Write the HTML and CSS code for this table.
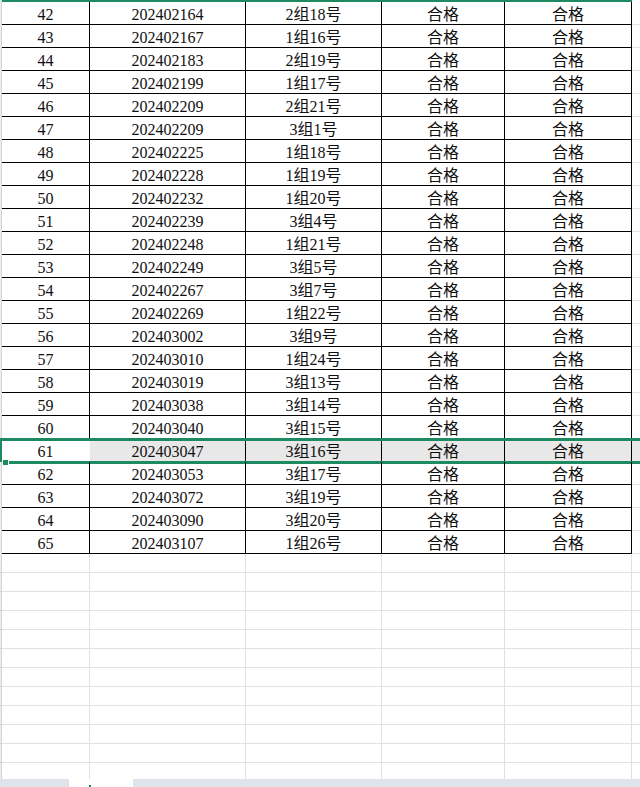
FILE: index.html
```html
<!DOCTYPE html>
<html lang="zh-CN">
<head>
<meta charset="utf-8">
<title>Sheet</title>
<link rel="stylesheet" href="styles.css">
</head>
<body>
<div class="sheet">
  <div class="topline"><div class="lead"></div><div class="green"></div><div></div></div>
  <div class="data">
    <div class="row"><div class="lead"></div><div class="c">42</div><div class="c">202402164</div><div class="c">2组18号</div><div class="c">合格</div><div class="c">合格</div><div class="tail"></div></div>
    <div class="row"><div class="lead"></div><div class="c">43</div><div class="c">202402167</div><div class="c">1组16号</div><div class="c">合格</div><div class="c">合格</div><div class="tail"></div></div>
    <div class="row"><div class="lead"></div><div class="c">44</div><div class="c">202402183</div><div class="c">2组19号</div><div class="c">合格</div><div class="c">合格</div><div class="tail"></div></div>
    <div class="row"><div class="lead"></div><div class="c">45</div><div class="c">202402199</div><div class="c">1组17号</div><div class="c">合格</div><div class="c">合格</div><div class="tail"></div></div>
    <div class="row"><div class="lead"></div><div class="c">46</div><div class="c">202402209</div><div class="c">2组21号</div><div class="c">合格</div><div class="c">合格</div><div class="tail"></div></div>
    <div class="row"><div class="lead"></div><div class="c">47</div><div class="c">202402209</div><div class="c">3组1号</div><div class="c">合格</div><div class="c">合格</div><div class="tail"></div></div>
    <div class="row"><div class="lead"></div><div class="c">48</div><div class="c">202402225</div><div class="c">1组18号</div><div class="c">合格</div><div class="c">合格</div><div class="tail"></div></div>
    <div class="row"><div class="lead"></div><div class="c">49</div><div class="c">202402228</div><div class="c">1组19号</div><div class="c">合格</div><div class="c">合格</div><div class="tail"></div></div>
    <div class="row"><div class="lead"></div><div class="c">50</div><div class="c">202402232</div><div class="c">1组20号</div><div class="c">合格</div><div class="c">合格</div><div class="tail"></div></div>
    <div class="row"><div class="lead"></div><div class="c">51</div><div class="c">202402239</div><div class="c">3组4号</div><div class="c">合格</div><div class="c">合格</div><div class="tail"></div></div>
    <div class="row"><div class="lead"></div><div class="c">52</div><div class="c">202402248</div><div class="c">1组21号</div><div class="c">合格</div><div class="c">合格</div><div class="tail"></div></div>
    <div class="row"><div class="lead"></div><div class="c">53</div><div class="c">202402249</div><div class="c">3组5号</div><div class="c">合格</div><div class="c">合格</div><div class="tail"></div></div>
    <div class="row"><div class="lead"></div><div class="c">54</div><div class="c">202402267</div><div class="c">3组7号</div><div class="c">合格</div><div class="c">合格</div><div class="tail"></div></div>
    <div class="row"><div class="lead"></div><div class="c">55</div><div class="c">202402269</div><div class="c">1组22号</div><div class="c">合格</div><div class="c">合格</div><div class="tail"></div></div>
    <div class="row"><div class="lead"></div><div class="c">56</div><div class="c">202403002</div><div class="c">3组9号</div><div class="c">合格</div><div class="c">合格</div><div class="tail"></div></div>
    <div class="row"><div class="lead"></div><div class="c">57</div><div class="c">202403010</div><div class="c">1组24号</div><div class="c">合格</div><div class="c">合格</div><div class="tail"></div></div>
    <div class="row"><div class="lead"></div><div class="c">58</div><div class="c">202403019</div><div class="c">3组13号</div><div class="c">合格</div><div class="c">合格</div><div class="tail"></div></div>
    <div class="row"><div class="lead"></div><div class="c">59</div><div class="c">202403038</div><div class="c">3组14号</div><div class="c">合格</div><div class="c">合格</div><div class="tail"></div></div>
    <div class="row"><div class="lead"></div><div class="c">60</div><div class="c">202403040</div><div class="c">3组15号</div><div class="c">合格</div><div class="c">合格</div><div class="tail"></div></div>
    <div class="row sel"><div class="lead"></div><div class="c active">61</div><div class="c">202403047</div><div class="c">3组16号</div><div class="c">合格</div><div class="c">合格</div><div class="tail"></div><span class="selbox"></span><span class="handle"></span></div>
    <div class="row"><div class="lead"></div><div class="c">62</div><div class="c">202403053</div><div class="c">3组17号</div><div class="c">合格</div><div class="c">合格</div><div class="tail"></div></div>
    <div class="row"><div class="lead"></div><div class="c">63</div><div class="c">202403072</div><div class="c">3组19号</div><div class="c">合格</div><div class="c">合格</div><div class="tail"></div></div>
    <div class="row"><div class="lead"></div><div class="c">64</div><div class="c">202403090</div><div class="c">3组20号</div><div class="c">合格</div><div class="c">合格</div><div class="tail"></div></div>
    <div class="row"><div class="lead"></div><div class="c">65</div><div class="c">202403107</div><div class="c">1组26号</div><div class="c">合格</div><div class="c">合格</div><div class="tail"></div></div>
  </div>
  <div class="empty">
    <div class="erow"><div class="lead"></div><div class="e"></div><div class="e"></div><div class="e"></div><div class="e"></div><div class="e"></div><div class="etail"></div></div>
    <div class="erow"><div class="lead"></div><div class="e"></div><div class="e"></div><div class="e"></div><div class="e"></div><div class="e"></div><div class="etail"></div></div>
    <div class="erow"><div class="lead"></div><div class="e"></div><div class="e"></div><div class="e"></div><div class="e"></div><div class="e"></div><div class="etail"></div></div>
    <div class="erow"><div class="lead"></div><div class="e"></div><div class="e"></div><div class="e"></div><div class="e"></div><div class="e"></div><div class="etail"></div></div>
    <div class="erow"><div class="lead"></div><div class="e"></div><div class="e"></div><div class="e"></div><div class="e"></div><div class="e"></div><div class="etail"></div></div>
    <div class="erow"><div class="lead"></div><div class="e"></div><div class="e"></div><div class="e"></div><div class="e"></div><div class="e"></div><div class="etail"></div></div>
    <div class="erow"><div class="lead"></div><div class="e"></div><div class="e"></div><div class="e"></div><div class="e"></div><div class="e"></div><div class="etail"></div></div>
    <div class="erow"><div class="lead"></div><div class="e"></div><div class="e"></div><div class="e"></div><div class="e"></div><div class="e"></div><div class="etail"></div></div>
    <div class="erow"><div class="lead"></div><div class="e"></div><div class="e"></div><div class="e"></div><div class="e"></div><div class="e"></div><div class="etail"></div></div>
    <div class="erow"><div class="lead"></div><div class="e"></div><div class="e"></div><div class="e"></div><div class="e"></div><div class="e"></div><div class="etail"></div></div>
    <div class="erow"><div class="lead"></div><div class="e"></div><div class="e"></div><div class="e"></div><div class="e"></div><div class="e"></div><div class="etail"></div></div>
    <div class="erow"><div class="lead"></div><div class="e"></div><div class="e"></div><div class="e"></div><div class="e"></div><div class="e"></div><div class="etail"></div></div>
  </div>
</div>
<div class="tabs"><div class="tab"><span class="tabmark"></span></div></div>
</body>
</html>
```
FILE: styles.css
```css
html, body {
  margin: 0;
  padding: 0;
  background: #ffffff;
  overflow: hidden;
}
body {
  width: 640px;
  height: 787px;
  display: flex;
  flex-direction: column;
}
.sheet {
  height: 779px;
  flex: none;
  overflow: hidden;
  display: flex;
  flex-direction: column;
}
.topline {
  display: grid;
  grid-template-columns: 2px 630px 8px;
  height: 2px;
  flex: none;
}
.topline .green {
  background: #1e8a62;
}
.row, .erow {
  display: grid;
  grid-template-columns: 2px 88px 156px 136px 123px 127px 8px;
  position: relative;
}
.row {
  height: 23px;
}
.erow {
  height: 19px;
}
.lead {
  background: #ededed;
  border-right: 1px solid #d4d4d4;
  box-sizing: border-box;
}
.c {
  box-sizing: border-box;
  border-right: 1px solid #000;
  border-bottom: 1px solid #000;
  text-align: center;
  font-family: "Liberation Serif", "Noto Sans CJK SC", serif;
  font-size: 16px;
  line-height: 19px;
  padding-top: 3px;
  color: #111;
  white-space: nowrap;
  overflow: hidden;
}
.tail {
  box-sizing: border-box;
  border-bottom: 1px solid #e4e4e4;
}
.sel .c {
  background: #e8e8e8;
}
.sel .c.active {
  background: #ffffff;
  border-right-color: #ffffff;
}
.sel .tail {
  background: #e8e8e8;
}
.selbox {
  position: absolute;
  left: 0;
  right: 0;
  top: -1px;
  bottom: -2px;
  border-top: 3px solid #1e8a62;
  border-bottom: 3px solid #1e8a62;
  border-left: 2px solid #1e8a62;
  pointer-events: none;
}
.handle {
  position: absolute;
  left: 3px;
  bottom: -3px;
  width: 5px;
  height: 5px;
  background: #1e8a62;
  outline: 1px solid #ffffff;
}
.e {
  box-sizing: border-box;
  border-right: 1px solid #e1e1e1;
  border-bottom: 1px solid #e1e1e1;
}
.etail {
  box-sizing: border-box;
  border-bottom: 1px solid #e1e1e1;
}
.erow .lead {
  border-bottom: 1px solid #cfcfcf;
}
.tabs {
  height: 8px;
  flex: none;
  background: #dfe3ea;
  display: flex;
}
.tab {
  margin-left: 69px;
  width: 64px;
  background: #ffffff;
  position: relative;
}
.tabmark {
  position: absolute;
  left: 20px;
  bottom: 0;
  width: 2px;
  height: 2px;
  background: #1e8a62;
}
```
